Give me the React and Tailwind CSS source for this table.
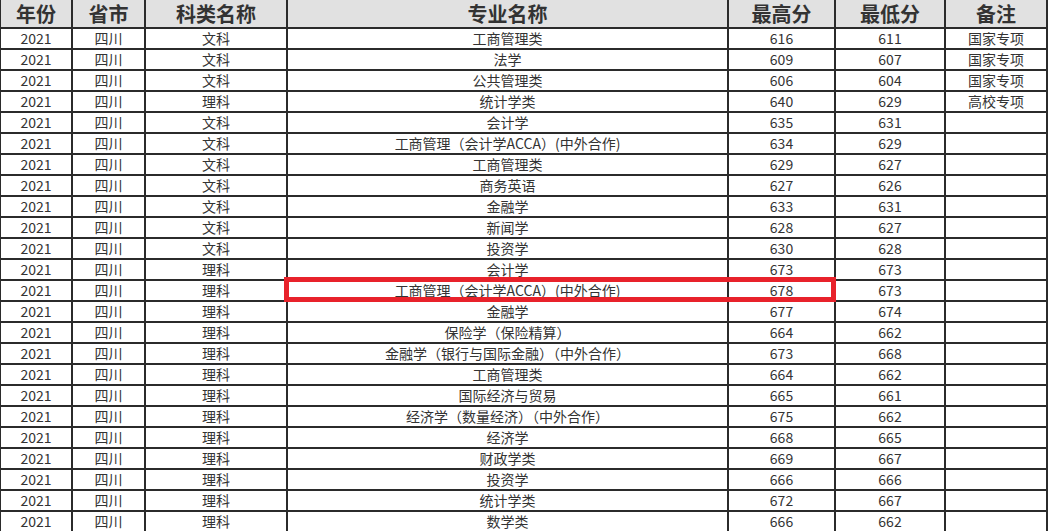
import React from "react";

const rows = [
  ["文科", "工商管理类", "616", "611", "国家专项"],
  ["文科", "法学", "609", "607", "国家专项"],
  ["文科", "公共管理类", "606", "604", "国家专项"],
  ["理科", "统计学类", "640", "629", "高校专项"],
  ["文科", "会计学", "635", "631", ""],
  ["文科", "工商管理（会计学ACCA）(中外合作)", "634", "629", ""],
  ["文科", "工商管理类", "629", "627", ""],
  ["文科", "商务英语", "627", "626", ""],
  ["文科", "金融学", "633", "631", ""],
  ["文科", "新闻学", "628", "627", ""],
  ["文科", "投资学", "630", "628", ""],
  ["理科", "会计学", "673", "673", ""],
  ["理科", "工商管理（会计学ACCA）(中外合作)", "678", "673", ""],
  ["理科", "金融学", "677", "674", ""],
  ["理科", "保险学（保险精算）", "664", "662", ""],
  ["理科", "金融学（银行与国际金融）（中外合作）", "673", "668", ""],
  ["理科", "工商管理类", "664", "662", ""],
  ["理科", "国际经济与贸易", "665", "661", ""],
  ["理科", "经济学（数量经济）（中外合作）", "675", "662", ""],
  ["理科", "经济学", "668", "665", ""],
  ["理科", "财政学类", "669", "667", ""],
  ["理科", "投资学", "666", "666", ""],
  ["理科", "统计学类", "672", "667", ""],
  ["理科", "数学类", "666", "662", ""],
];

const headers = ["年份", "省市", "科类名称", "专业名称", "最高分", "最低分", "备注"];

export default function App() {
  return (
    <div
      className="relative w-[1048px] h-[531px] overflow-hidden bg-white"
      style={{ fontFamily: '"Noto Sans CJK SC", "Noto Sans", sans-serif' }}
    >
      <div className="grid grid-cols-[70px_71px_140px_439px_105px_108px_100px] auto-rows-[19px] grid-rows-[27px] gap-x-[2px] gap-y-[2px] bg-[#2b2b2b] pl-[1px] pr-[2px] w-[1048px]">
        {headers.map((h) => (
          <div
            key={h}
            className="flex items-center justify-center bg-[#e1e1e1] text-[20px] font-bold text-[#333333] leading-[25px]"
          >
            {h}
          </div>
        ))}
        {rows.map((r, i) => (
          <React.Fragment key={i}>
            {["2021", "四川", r[0], r[1], r[2], r[3], r[4]].map((c, j) => (
              <div
                key={j}
                className="flex items-start justify-center bg-white text-[14px] text-[#333333] leading-[18px] whitespace-nowrap"
              >
                {c}
              </div>
            ))}
          </React.Fragment>
        ))}
      </div>
      <div className="absolute left-[284px] top-[277px] w-[552px] h-[25px] border-[5px] border-[#e8222b]" />
    </div>
  );
}
